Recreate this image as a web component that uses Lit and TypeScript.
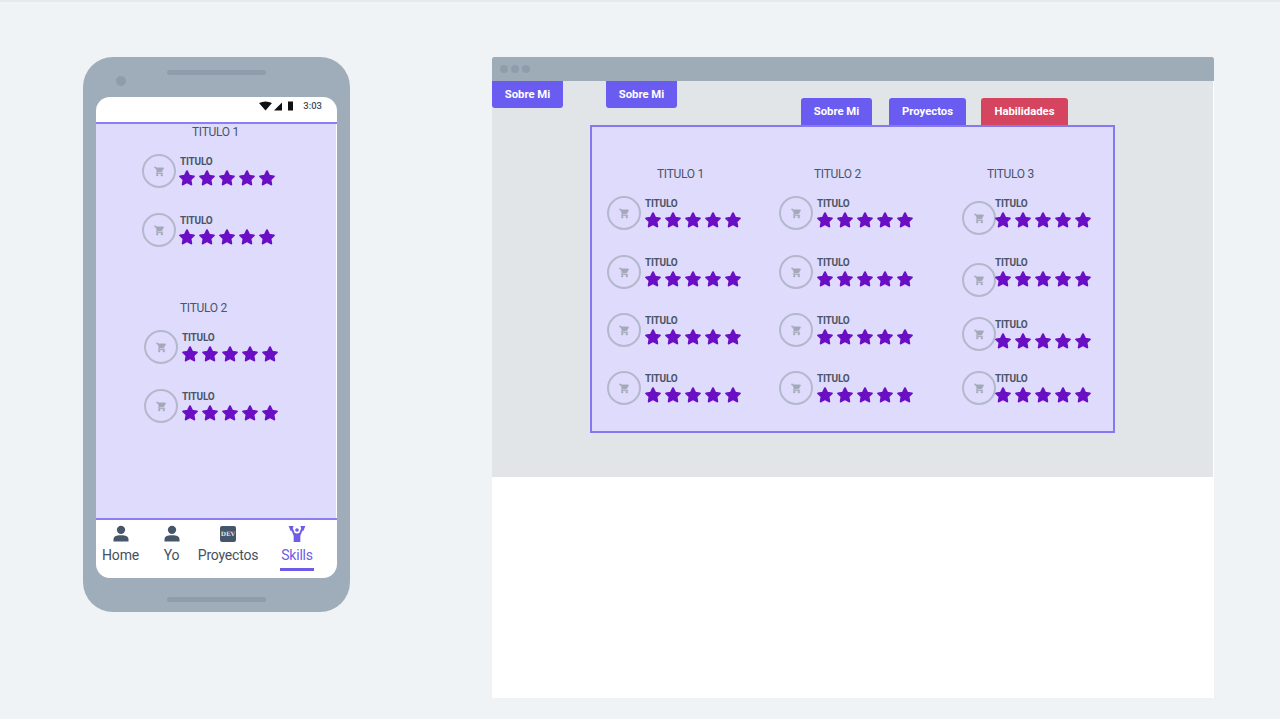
import { LitElement, html, css, svg } from 'lit';
import { customElement } from 'lit/decorators.js';

const cartPath = 'M7 18c-1.1 0-1.99.9-1.99 2S5.9 22 7 22s2-.9 2-2-.9-2-2-2zM1 2v2h2l3.6 7.59-1.35 2.45c-.16.28-.25.61-.25.96 0 1.1.9 2 2 2h12v-2H7.42c-.14 0-.25-.11-.25-.25l.03-.12.9-1.63h7.45c.75 0 1.41-.41 1.75-1.03l3.58-6.49c.08-.14.12-.31.12-.48 0-.55-.45-1-1-1H5.21l-.94-2H1zm16 16c-1.1 0-1.99.9-1.99 2s.89 2 1.99 2 2-.9 2-2-.9-2-2-2z';
const starPoints = '12,3 14.9,8.9 21.2,9.8 16.6,14.200 17.700,20.600 12,17.500 6.300,20.600 7.400,14.200 2.800,9.800 9.100,8.900';

interface SkillRow {
  gap?: number;      // extra space above the row
  pull?: number;     // extra space below the row, negative takes it back
  circle?: number;   // how far the circle hangs below the text
}

const star = () => html`
  <svg class="star" viewBox="0 0 24 24">
    <polygon points=${starPoints}></polygon>
  </svg>
`;

const skill = (row: SkillRow = {}) => html`
  <div class="skill" style="margin-top:${row.gap ?? 0}px;margin-bottom:${row.pull ?? 0}px">
    <div class="skill__circle" style="margin-top:${row.circle ?? 0}px">
      <svg viewBox="0 0 24 24"><path d=${cartPath}></path></svg>
    </div>
    <div class="skill__text">
      <div class="skill__title">TITULO</div>
      <div class="skill__stars">${star()}${star()}${star()}${star()}${star()}</div>
    </div>
  </div>
`;

const person = () => svg`
  <circle cx="12" cy="7" r="5"></circle>
  <path d="M3 21v-2.500C3 15 6 13.500 12 13.500s9 1.500 9 5V21z"></path>
`;

const lifter = () => svg`
  <path d="M2 2.500h6l-1 2.500 2 5.500Q12 12.500 15 10.500L17 5l-1-2.500h6l-2.200 5.500h-1.300L16 14v7.500H8V14L5.500 8H4.200z"></path>
  <circle cx="12" cy="7.200" r="2.200"></circle>
`;

@customElement('app-root')
export default class AppRoot extends LitElement {
  static override styles = css`
    :host {
      display: block;
      height: 719px;
      overflow: hidden;
      font-family: Roboto, "Liberation Sans", sans-serif;
      color: #4a5568;
    }
    .page {
      box-sizing: border-box;
      height: 719px;
      display: flex;
      align-items: flex-start;
      padding: 55px 0 0 83px;
      background: #eff3f6;
      border-top: 2px solid #e6e9ec;
    }

    /* phone */
    .phone {
      box-sizing: border-box;
      width: 267px;
      height: 555px;
      margin-right: 142px;
      padding: 13px 13px 0;
      display: flex;
      flex-direction: column;
      border-radius: 30px;
      background: #9fadba;
    }
    .phone__top {
      position: relative;
      height: 27px;
      display: flex;
      justify-content: center;
    }
    .speaker {
      width: 99px;
      height: 5px;
      border-radius: 3px;
      background: #8e9dab;
    }
    .camera {
      position: absolute;
      left: 20px;
      top: 6px;
      width: 10px;
      height: 10px;
      border-radius: 50%;
      background: #8e9dab;
    }
    .phone__screen {
      height: 481px;
      display: flex;
      flex-direction: column;
      border-radius: 14px;
      background: #fff;
      overflow: hidden;
    }
    .status {
      box-sizing: border-box;
      height: 27px;
      flex: none;
      display: flex;
      align-items: flex-start;
      justify-content: flex-end;
      padding: 2px 15px 0 0;
      border-bottom: 2px solid #8b7fef;
      font-size: 9.5px;
      font-weight: 500;
      line-height: 14px;
      color: #46505c;
    }
    .status svg {
      width: 36px;
      height: 10px;
      margin: 2px 8px 0 0;
      fill: #111;
    }
    .phone__content {
      flex: 1;
      margin-right: 1px;
      background: #dedbfd;
    }
    .phone__title {
      font-size: 12px;
      line-height: 16px;
      letter-spacing: -0.3px;
    }
    .phone__title--one { margin-left: 96px; }
    .phone__title--two { margin: 54px 0 0 84px; }
    .phone__group {
      display: flex;
      flex-direction: column;
      gap: 26px;
    }
    .phone__group--one { margin: 14px 0 0 46px; }
    .phone__group--one .skill__stars { margin-left: -2px; }
    .phone__group--two { margin: 14px 0 0 48px; }

    .nav {
      box-sizing: border-box;
      height: 60px;
      flex: none;
      display: flex;
      border-top: 2px solid #8b7fef;
    }
    .nav__item {
      display: flex;
      flex-direction: column;
      align-items: center;
      padding-top: 4px;
      font-size: 14px;
      line-height: 18px;
      letter-spacing: -0.2px;
      color: #46505c;
    }
    .nav__item svg {
      width: 20px;
      height: 20px;
      margin-bottom: 2px;
      fill: #46566a;
    }
    .nav__item--home { width: 49px; }
    .nav__item--yo { width: 53px; }
    .nav__item--work { width: 60px; }
    .nav__item--skills { width: 34px; margin-left: 22px; color: #6c5ce7; }
    .nav__item--skills svg { fill: #6c5ce7; }
    .nav__bar {
      width: 100%;
      height: 3px;
      margin-top: 4px;
      background: #6c5ce7;
    }
    .dev {
      box-sizing: border-box;
      width: 16px;
      height: 16px;
      margin: 2px 0 4px;
      border-radius: 2px;
      background: #46566a;
      color: #dfe3e8;
      font: bold 6px/16px "DejaVu Serif", "Liberation Serif", serif;
      letter-spacing: 0;
      text-align: center;
    }
    .home-key {
      width: 99px;
      height: 5px;
      margin: 19px auto 0;
      border-radius: 3px;
      background: #8e9dab;
    }

    /* browser */
    .browser {
      width: 722px;
      height: 641px;
      display: flex;
      flex-direction: column;
      background: #fff;
    }
    .browser__bar {
      height: 24px;
      flex: none;
      display: flex;
      align-items: center;
      gap: 3px;
      padding-left: 8px;
      border-radius: 2px 2px 0 0;
      background: #9eacb8;
    }
    .browser__dot {
      width: 8px;
      height: 8px;
      border-radius: 50%;
      background: #8e9dab;
    }
    .browser__body {
      height: 396px;
      margin-right: 1px;
      background: #e2e5e8;
    }
    .browser__head {
      height: 44px;
      display: flex;
      align-items: flex-start;
    }
    .btn {
      height: 27px;
      display: flex;
      align-items: center;
      justify-content: center;
      border-radius: 0 0 3px 3px;
      background: #6a5cf0;
      color: #fff;
      font-size: 11.3px;
      font-weight: 700;
    }
    .btn--about { width: 71px; }
    .btn--second { margin-left: 43px; }
    .tabs {
      display: flex;
      margin: 17px 0 0 124px;
    }
    .tabs .btn { border-radius: 3px 3px 0 0; }
    .btn--work { width: 77px; margin-left: 17px; }
    .btn--skills { width: 87px; margin-left: 15px; background: #d6455f; }

    .panel {
      box-sizing: border-box;
      width: 525px;
      height: 308px;
      margin-left: 98px;
      padding: 39px 0 0 15px;
      display: flex;
      border: 2px solid #8679ef;
      background: #dedbfd;
    }
    .col { display: flex; flex-direction: column; gap: 25px; }
    .col--one { width: 172px; }
    .col--two { width: 183px; }
    .col--three { flex: 1; }
    .col__title {
      font-size: 12px;
      line-height: 16px;
      letter-spacing: -0.3px;
      margin-bottom: -11px;
    }
    .col--one .col__title { padding-left: 50px; }
    .col--two .col__title { padding-left: 35px; }
    .col--three .col__title { padding-left: 25px; }
    .col--three .skill { gap: 0; }
    .col--three .skill__text { margin-left: -1px; }

    /* skill row */
    .skill {
      height: 33px;
      display: flex;
      gap: 4px;
    }
    .skill__circle {
      box-sizing: border-box;
      width: 34px;
      height: 34px;
      flex: none;
      display: flex;
      align-items: center;
      justify-content: center;
      border: 2px solid #b4b8cb;
      border-radius: 50%;
    }
    .skill__circle svg {
      width: 11px;
      height: 11px;
      fill: #a4a9b8;
      stroke: #a4a9b8;
      stroke-width: 1;
    }
    .skill__text { padding-top: 2px; }
    .skill__title {
      font-size: 10px;
      font-weight: 700;
      line-height: 12px;
      letter-spacing: -0.2px;
    }
    .skill__stars {
      display: flex;
      gap: 2px;
      margin: 1px 0 0 -1px;
    }
    .star {
      width: 18px;
      height: 18px;
      fill: #6a0fc4;
      stroke: #6a0fc4;
      stroke-width: 2.6;
      stroke-linejoin: round;
    }
  `;

  override render() {
    return html`
      <div class="page">
        <div class="phone">
          <div class="phone__top">
            <div class="camera"></div>
            <div class="speaker"></div>
          </div>
          <div class="phone__screen">
            <div class="status">
              <svg viewBox="0 0 36 10">
                <path d="M0 2Q6.500 -1 13 2L6.500 9.500zM15 9.500l8-8v8zM29 .5h5v9h-5z"></path>
              </svg>
              <span>3:03</span>
            </div>
            <div class="phone__content">
              <div class="phone__title phone__title--one">TITULO 1</div>
              <div class="phone__group phone__group--one">${skill()}${skill()}</div>
              <div class="phone__title phone__title--two">TITULO 2</div>
              <div class="phone__group phone__group--two">${skill()}${skill()}</div>
            </div>
            <div class="nav">
              <div class="nav__item nav__item--home">
                <svg viewBox="0 0 24 24">${person()}</svg>Home
              </div>
              <div class="nav__item nav__item--yo">
                <svg viewBox="0 0 24 24">${person()}</svg>Yo
              </div>
              <div class="nav__item nav__item--work">
                <div class="dev">DEV</div>Proyectos
              </div>
              <div class="nav__item nav__item--skills">
                <svg viewBox="0 0 24 24">${lifter()}</svg>Skills
                <div class="nav__bar"></div>
              </div>
            </div>
          </div>
          <div class="home-key"></div>
        </div>

        <div class="browser">
          <div class="browser__bar">
            <div class="browser__dot"></div>
            <div class="browser__dot"></div>
            <div class="browser__dot"></div>
          </div>
          <div class="browser__body">
            <div class="browser__head">
              <div class="btn btn--about">Sobre Mi</div>
              <div class="btn btn--about btn--second">Sobre Mi</div>
              <div class="tabs">
                <div class="btn btn--about">Sobre Mi</div>
                <div class="btn btn--work">Proyectos</div>
                <div class="btn btn--skills">Habilidades</div>
              </div>
            </div>
            <div class="panel">
              <div class="col col--one">
                <div class="col__title">TITULO 1</div>
                ${skill({ pull: 1 })}${skill()}${skill()}${skill()}
              </div>
              <div class="col col--two">
                <div class="col__title">TITULO 2</div>
                ${skill({ pull: 1 })}${skill()}${skill()}${skill()}
              </div>
              <div class="col col--three">
                <div class="col__title">TITULO 3</div>
                ${skill({ circle: 5, pull: 1 })}
                ${skill({ circle: 8 })}
                ${skill({ gap: 4, pull: -4 })}
                ${skill()}
              </div>
            </div>
          </div>
        </div>
      </div>
    `;
  }
}
